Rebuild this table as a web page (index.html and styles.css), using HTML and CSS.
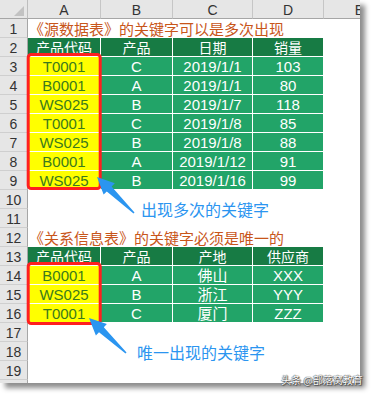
FILE: index.html
```html
<!DOCTYPE html>
<html lang="zh-CN">
<head>
<meta charset="utf-8">
<title>关键字</title>
<link rel="stylesheet" href="styles.css">
</head>
<body>
<div class="page">
  <div class="frame">
    <div class="sheet">
      <div class="corner"><span class="tri"></span></div>
      <div class="ch">A</div><div class="ch">B</div><div class="ch">C</div><div class="ch">D</div><div class="ch">E</div>

      <div class="rh">1</div><div class="title">《源数据表》的关键字可以是多次出现</div>
      <div class="rh">2</div><div class="th">产品代码</div><div class="th">产品</div><div class="th">日期</div><div class="th">销量</div>
      <div class="rh">3</div><div class="key">T0001</div><div class="td">C</div><div class="td">2019/1/1</div><div class="td">103</div>
      <div class="rh">4</div><div class="key">B0001</div><div class="td">A</div><div class="td">2019/1/1</div><div class="td">80</div>
      <div class="rh">5</div><div class="key">WS025</div><div class="td">B</div><div class="td">2019/1/7</div><div class="td">118</div>
      <div class="rh">6</div><div class="key">T0001</div><div class="td">C</div><div class="td">2019/1/8</div><div class="td">85</div>
      <div class="rh">7</div><div class="key">WS025</div><div class="td">B</div><div class="td">2019/1/8</div><div class="td">88</div>
      <div class="rh">8</div><div class="key">B0001</div><div class="td">A</div><div class="td">2019/1/12</div><div class="td">91</div>
      <div class="rh">9</div><div class="key">WS025</div><div class="td">B</div><div class="td">2019/1/16</div><div class="td">99</div>
      <div class="rh">10</div>
      <div class="rh">11</div>
      <div class="note note1">出现多次的关键字</div>
      <div class="rh">12</div><div class="title">《关系信息表》的关键字必须是唯一的</div>
      <div class="rh">13</div><div class="th">产品代码</div><div class="th">产品</div><div class="th">产地</div><div class="th">供应商</div>
      <div class="rh">14</div><div class="key">B0001</div><div class="td">A</div><div class="td">佛山</div><div class="td">XXX</div>
      <div class="rh">15</div><div class="key">WS025</div><div class="td">B</div><div class="td">浙江</div><div class="td">YYY</div>
      <div class="rh">16</div><div class="key">T0001</div><div class="td">C</div><div class="td">厦门</div><div class="td">ZZZ</div>
      <div class="rh">17</div>
      <div class="rh">18</div>
      <div class="note note2">唯一出现的关键字</div>
      <div class="rh">19</div>
      <div class="rh"></div>
    </div>
    <svg class="marks" width="360" height="383" viewBox="0 0 360 383">
      <rect x="28.2" y="54.5" width="72" height="134" rx="3" ry="3" fill="none" stroke="#ff1f1f" stroke-width="3"/>
      <rect x="28.2" y="263.5" width="72" height="60" rx="3" ry="3" fill="none" stroke="#ff1f1f" stroke-width="3"/>
      <polygon fill="#2b95f0" points="97,177 114.8,183.2 111.6,186.4 134.5,212.5 133.5,213.5 106.8,191.4 103.6,194.6"/>
      <polygon fill="#2b95f0" points="89,318 106.9,323.9 103.8,327.2 126.5,352.5 125.5,353.5 99,332.2 95.9,335.5"/>
    </svg>
  </div>
  <div class="watermark">头条 @部落窝教育</div>
</div>
</body>
</html>
```

FILE: styles.css
```css
* { box-sizing: border-box; }

body {
  margin: 0;
  background: #ffffff;
}

.page {
  position: relative;
  width: 372px;
  height: 395px;
}

.frame {
  position: relative;
  width: 360px;
  height: 383px;
  overflow: hidden;
  background: #ffffff;
  box-shadow: 5px 5px 5px rgba(0, 0, 0, 0.45);
}

.sheet {
  display: grid;
  grid-template-columns: 28px 73px 72px 80px 71px 72px;
  grid-auto-rows: 19px;
  font-family: "Liberation Sans", "Noto Sans CJK SC", sans-serif;
}

.corner {
  background: #e6e6e6;
  border-right: 1px solid #bdbdbd;
  border-bottom: 1px solid #a6a6a6;
  display: flex;
  justify-content: flex-end;
  align-items: flex-end;
  padding: 0 3px 2px 0;
}

.tri {
  width: 0;
  height: 0;
  border-left: 10px solid transparent;
  border-bottom: 10px solid #c2c2c2;
}

.ch {
  background: #e6e6e6;
  border-right: 1px solid #c6c6c6;
  border-bottom: 1px solid #a6a6a6;
  color: #333333;
  font-size: 14px;
  display: flex;
  align-items: center;
  justify-content: center;
  padding-top: 2px;
}

.rh {
  grid-column: 1;
  background: #e6e6e6;
  border-right: 1px solid #a6a6a6;
  border-bottom: 1px solid #cfcfcf;
  color: #333333;
  font-size: 14px;
  display: flex;
  align-items: center;
  justify-content: center;
  padding-top: 1px;
}

.title {
  grid-column: 2 / span 5;
  font-family: "Noto Sans CJK SC", sans-serif;
  font-size: 15px;
  color: #c8561a;
  white-space: nowrap;
  display: flex;
  align-items: center;
  padding-left: 1px;
  line-height: 1;
}

.th,
.td,
.key {
  border-right: 1px solid #ffffff;
  border-bottom: 1px solid #ffffff;
  display: flex;
  align-items: center;
  justify-content: center;
  white-space: nowrap;
  line-height: 1;
}

.th {
  background: #177b44;
  color: #ffffff;
  font-family: "Noto Sans CJK SC", sans-serif;
  font-size: 14px;
}

.td {
  background: #22a468;
  color: #ffffff;
  font-size: 15px;
}

.key {
  background: #ffff00;
  color: #3b7a1d;
  font-size: 15px;
}

.note {
  color: #2b95f0;
  font-family: "Noto Sans CJK SC", sans-serif;
  font-size: 16px;
  white-space: nowrap;
  display: flex;
  align-items: center;
  line-height: 1;
}

.note1 {
  grid-column: 3 / 7;
  grid-row: 11 / 13;
  padding-left: 40px;
}

.note2 {
  grid-column: 3 / 7;
  grid-row: 19;
  padding-left: 36px;
}

.marks {
  position: absolute;
  left: 0;
  top: 0;
  pointer-events: none;
}

.watermark {
  position: absolute;
  left: 281px;
  top: 374px;
  font-family: "Noto Sans CJK SC", sans-serif;
  font-size: 10px;
  line-height: 12px;
  color: #ffffff;
  white-space: nowrap;
  text-shadow: 0 0 1px #333, 0 0 1px #333, 1px 1px 1px #555;
}
```
